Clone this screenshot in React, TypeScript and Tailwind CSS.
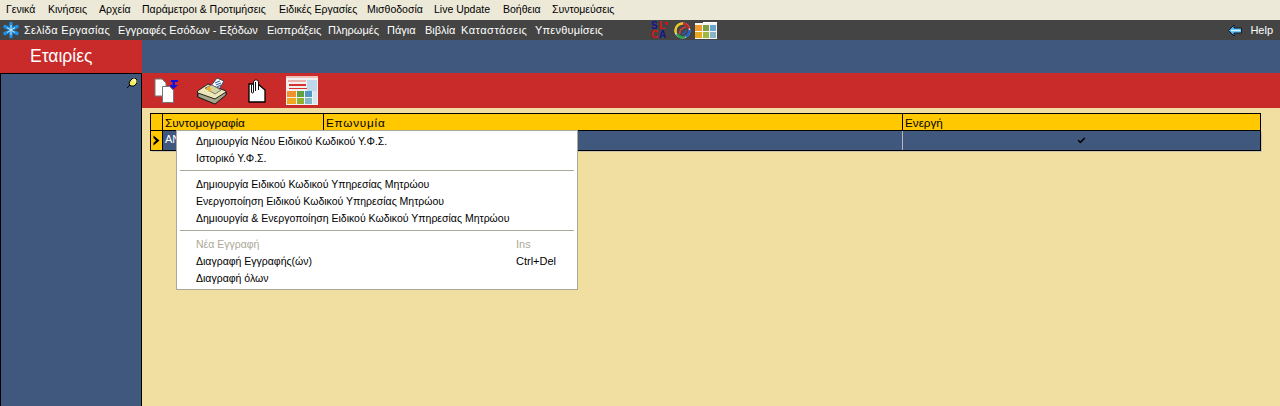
import React from 'react';
import { Check } from 'lucide-react';

const topMenu = [
  { label: 'Γενικά', w: 'w-[42px]' },
  { label: 'Κινήσεις', w: 'w-[51px]' },
  { label: 'Αρχεία', w: 'w-[43px]' },
  { label: 'Παράμετροι & Προτιμήσεις', w: 'w-[137px]' },
  { label: 'Ειδικές Εργασίες', w: 'w-[88px]' },
  { label: 'Μισθοδοσία', w: 'w-[67px]' },
  { label: 'Live Update', w: 'w-[69px]' },
  { label: 'Βοήθεια', w: 'w-[49px]' },
  { label: 'Συντομεύσεις', w: 'w-[70px]' },
];

const navMenu = [
  { label: 'Σελίδα Εργασίας', w: 'w-[94px] tracking-[0.3px]' },
  { label: 'Εγγραφές Εσόδων - Εξόδων', w: 'w-[149px]' },
  { label: 'Εισπράξεις', w: 'w-[61px]' },
  { label: 'Πληρωμές', w: 'w-[59px]' },
  { label: 'Πάγια', w: 'w-[38px]' },
  { label: 'Βιβλία', w: 'w-[36px]' },
  { label: 'Καταστάσεις', w: 'w-[74px] tracking-[0.5px]' },
  { label: 'Υπενθυμίσεις', w: 'w-[116px] tracking-[0.2px]' },
];

const font = "font-['Liberation_Sans',Arial,sans-serif]";

const AsteriskLogo = () => (
  <svg width="16" height="16" viewBox="0 0 16 16" className="shrink-0">
    <g stroke="#1e90e8" strokeWidth="3.4" strokeLinecap="round">
      <path d="M8 1.500v13M2 4.500l12 7M14 4.500l-12 7" />
    </g>
    <path d="M8 3v10M4 5.500l8 5M12 5.500l-8 5" stroke="#c4ecff" strokeWidth="1" />
  </svg>
);

const SoftwareLogo = () => (
  <svg width="17" height="18" viewBox="0 0 17 18" className="shrink-0" fontFamily="Liberation Sans" fontWeight="700" fontSize="10">
    <text x="0" y="8" fill="#14148c">S</text>
    <text x="8" y="8" fill="#e01010">L</text>
    <text x="0" y="17" fill="#e01010">C</text>
    <text x="8" y="17" fill="#14148c">A</text>
    <path d="M13 1h4v4z" fill="#e01010" />
  </svg>
);

const RingLogo = () => (
  <svg width="17" height="17" viewBox="0 0 17 17" fill="none" className="shrink-0">
    <circle cx="8.500" cy="8.500" r="7.200" stroke="#e8e8e8" strokeWidth="1.600" />
    <path d="M2 11A7 7 0 0 1 9 1.600" stroke="#e8c820" strokeWidth="2.400" />
    <path d="M9 1.600a7 7 0 0 1 6 5" stroke="#d02828" strokeWidth="2.400" />
    <path d="M15.400 8a7 7 0 0 1-4 6.600" stroke="#2860c8" strokeWidth="2.400" />
    <path d="M11 15a7 7 0 0 1-8-3" stroke="#28a048" strokeWidth="2.400" />
    <path d="M6 12c-1-3 1-6 6-7" stroke="#d04040" strokeWidth="1.600" />
    <path d="M8 12c2 0 4-2 4-4" stroke="#2860c8" strokeWidth="1.400" />
  </svg>
);

const TilesLogo = () => (
  <svg width="22" height="17" viewBox="0 0 22 17" className="shrink-0">
    <rect x="0" y="1" width="22" height="16" fill="#f4f4f4" />
    <rect x="8" y="0" width="14" height="1" fill="#fff" />
    <rect x="0" y="3" width="7" height="6" fill="#f09a30" />
    <rect x="8" y="3" width="6" height="6" fill="#7f9f40" />
    <rect x="15" y="3" width="6" height="6" fill="#68a4d0" />
    <rect x="0" y="10" width="7" height="6" fill="#e8a820" />
    <rect x="8" y="10" width="6" height="6" fill="#a0b840" />
    <rect x="15" y="10" width="6" height="6" fill="#88b4c8" />
  </svg>
);

const HelpArrow = () => (
  <svg width="14" height="13" viewBox="0 0 14 13" className="shrink-0">
    <path d="M0.500 6.500L6 1V4H13.500V9H6V12Z" fill="#50b8f8" stroke="#101828" strokeWidth="1" />
    <path d="M3 6.500H12.500" stroke="#d8f4ff" strokeWidth="1.500" />
  </svg>
);

const CopyIcon = () => (
  <svg width="27" height="25" viewBox="0 0 27 25" className="shrink-0">
    <path d="M1 1h7l4 4v13H1z" fill="#fff" stroke="#777" />
    <path d="M8.500 8.500h7l4 4v12h-11z" fill="#fff" stroke="#777" />
    <path d="M17 2h7v2h-3v3h3l-4.500 4L15 7h3.500V4H17z" fill="#1010e0" />
  </svg>
);

const PrinterIcon = () => (
  <svg width="30" height="28" viewBox="0 0 30 28" className="shrink-0">
    <path d="M13 10L20 1l7 3-6 10z" fill="#fff" stroke="#444" />
    <path d="M18 6l5-2M19 8l5-2M20 10l4-2" stroke="#3a6ab0" strokeWidth="1.200" />
    <path d="M0.500 14L11 7l18 7v4l-11 9-17.500-7z" fill="#ece8b8" stroke="#222" />
    <path d="M1 16l17 6 11-7v3l-11 9-17-7z" fill="#a8a488" stroke="#222" />
    <path d="M8 11l7-3 9 5-6 4z" fill="#d8d4a0" stroke="#777" />
    <path d="M10 11l2-2 1 2 2 1-2 1-1 2-1-2-2-1z" fill="#f0b020" />
  </svg>
);

const ClipIcon = () => (
  <svg width="18" height="24" viewBox="0 0 18 24" className="shrink-0">
    <path d="M1 5v18h16V11l-7-6z" fill="#fff" stroke="#000" strokeWidth="1.300" />
    <path d="M3.500 6v7a1 1 0 0 0 2 0V3a2 2 0 0 1 2-2h1a2 2 0 0 1 2 2v8" stroke="#111" strokeWidth="1" fill="#fff" />
    <path d="M7.500 3v9" stroke="#111" strokeWidth="1" />
  </svg>
);

const ReportIcon = () => (
  <svg width="32" height="29" viewBox="0 0 32 29" className="shrink-0">
    <rect x="0" y="2" width="32" height="27" fill="#f2f0ee" />
    <rect x="0" y="0" width="32" height="2" fill="#eec0b8" />
    <rect x="2" y="4" width="18" height="2" fill="#e8b0a8" />
    <rect x="3" y="8" width="17" height="2" fill="#d83030" />
    <rect x="3" y="12" width="20" height="1" fill="#d83030" />
    <rect x="21" y="4" width="10" height="11" fill="#c0d6ea" />
    <rect x="1" y="15" width="9" height="6" fill="#f09030" />
    <rect x="11" y="15" width="7" height="6" fill="#60a040" />
    <rect x="19" y="15" width="7" height="6" fill="#5098c8" />
    <rect x="1" y="22" width="9" height="6" fill="#f0a820" />
    <rect x="11" y="22" width="7" height="6" fill="#90b030" />
    <rect x="19" y="22" width="7" height="6" fill="#80b8c8" />
    <rect x="27" y="15" width="4" height="13" fill="#d8e4ee" />
  </svg>
);

const PinIcon = () => (
  <svg width="10" height="10" viewBox="0 0 10 10">
    <path d="M0 10l3-3" stroke="#000" />
    <path d="M3 3l3-3h2l2 2v3l-3 3H4L2 6z" fill="#f4f060" stroke="#000" />
    <path d="M6 2h2v2" stroke="#fff" fill="none" />
  </svg>
);

const RowPointer = () => (
  <svg width="7" height="11" viewBox="0 0 7 11">
    <path d="M0.500 0.500L6.500 5.500L0.500 10.500V8L3 5.500L0.500 3z" fill="#000" />
  </svg>
);

const MenuRow = ({ label, shortcut, disabled }: { label: string; shortcut?: string; disabled?: boolean }) => (
  <div className={`flex h-[17px] items-center pl-[19px] ${disabled ? 'text-[#aca899]' : ''}`}>
    <span className="w-[320px] whitespace-nowrap">{label}</span>
    {shortcut && <span className="text-[11px]">{shortcut}</span>}
  </div>
);

const MenuDivider = () => (
  <div className="h-[9px] px-[3px] pt-[3px]">
    <div className="h-px w-full bg-[#aca899]" />
  </div>
);

const ContextMenu = () => (
  <div className="absolute left-[176px] top-[130px] h-[160px] w-[402px] border border-[#aca899] bg-white pt-[2px] text-[10.5px] text-black">
    <MenuRow label="Δημιουργία Νέου Ειδικού Κωδικού Υ.Φ.Σ." />
    <MenuRow label="Ιστορικό Υ.Φ.Σ." />
    <MenuDivider />
    <MenuRow label="Δημιουργία Ειδικού Κωδικού Υπηρεσίας Μητρώου" />
    <MenuRow label="Ενεργοποίηση Ειδικού Κωδικού Υπηρεσίας Μητρώου" />
    <MenuRow label="Δημιουργία & Ενεργοποίηση Ειδικού Κωδικού Υπηρεσίας Μητρώου" />
    <MenuDivider />
    <MenuRow label="Νέα Εγγραφή" shortcut="Ins" disabled />
    <MenuRow label="Διαγραφή Εγγραφής(ών)" shortcut="Ctrl+Del" />
    <MenuRow label="Διαγραφή όλων" />
  </div>
);

export default function App() {
  return (
    <div className={`relative h-[406px] w-[1280px] overflow-hidden bg-[#f0dfa0] ${font} text-[11px]`}>
      {/* top menu */}
      <div className="flex h-[20px] items-center bg-[#ece9d8] pl-[6px] text-[10.5px] text-black">
        {topMenu.map((item) => (
          <span key={item.label} className={`whitespace-nowrap ${item.w}`}>{item.label}</span>
        ))}
      </div>

      {/* nav bar */}
      <div className="flex h-[20px] items-center bg-[#444444] pl-[3px] pr-[7px] text-white">
        <AsteriskLogo />
        <div className="ml-[5px] flex">
          {navMenu.map((item) => (
            <span key={item.label} className={`whitespace-nowrap ${item.w}`}>{item.label}</span>
          ))}
        </div>
        <div className="flex items-center">
          <SoftwareLogo />
          <div className="ml-[6px]"><RingLogo /></div>
          <div className="ml-[4px]"><TilesLogo /></div>
        </div>
        <div className="ml-auto flex items-center gap-[8px]">
          <HelpArrow />
          <span>Help</span>
        </div>
      </div>

      <div className="flex h-[366px]">
        {/* left side */}
        <div className="flex w-[142px] shrink-0 flex-col">
          <div className="flex h-[33px] items-center bg-[#c92a2a] pb-[1px] pl-[30px] text-[17.500px] text-white">
            Εταιρίες
          </div>
          <div className="-mb-px flex flex-1 justify-end border border-black bg-[#40587e] pr-[4px] pt-[4px]">
            <PinIcon />
          </div>
        </div>

        {/* right side */}
        <div className="flex flex-1 flex-col">
          <div className="h-[33px] bg-[#40587e]" />
          <div className="flex h-[35px] items-center bg-[#c92a2a] pl-[12px]">
            <CopyIcon />
            <div className="ml-[16px]"><PrinterIcon /></div>
            <div className="ml-[21px]"><ClipIcon /></div>
            <div className="ml-[20px]"><ReportIcon /></div>
          </div>
          <div className="flex-1 pl-[8px] pr-[19px] pt-[5px]">
            <div className="w-[1111px] border-l border-black">
              <div className="flex h-[18px] border-y border-r border-black bg-[#ffc800] text-[11.700px] text-black">
                <div className="w-[12px] border-r border-black" />
                <div className="w-[161px] border-r border-black pl-[2px]">Συντομογραφία</div>
                <div className="w-[579px] border-r border-black pl-[2px] tracking-[0.8px]">Επωνυμία</div>
                <div className="flex-1 pl-[2px]">Ενεργή</div>
              </div>
              <div className="flex h-[20px] border-b border-r border-black bg-[#40587e] text-white shadow-[1px_1px_0_#c8c4b0]">
                <div className="flex w-[12px] items-center justify-center border-r border-black bg-[#ffc800]">
                  <RowPointer />
                </div>
                <div className="w-[161px] pl-[2px]">ΑΝ</div>
                <div className="w-[579px] border-r border-[#b8b8b8]" />
                <div className="flex flex-1 items-center justify-center">
                  <Check size={9} strokeWidth={4} className="text-black" />
                </div>
              </div>
            </div>
          </div>
        </div>
      </div>

      <ContextMenu />
    </div>
  );
}
